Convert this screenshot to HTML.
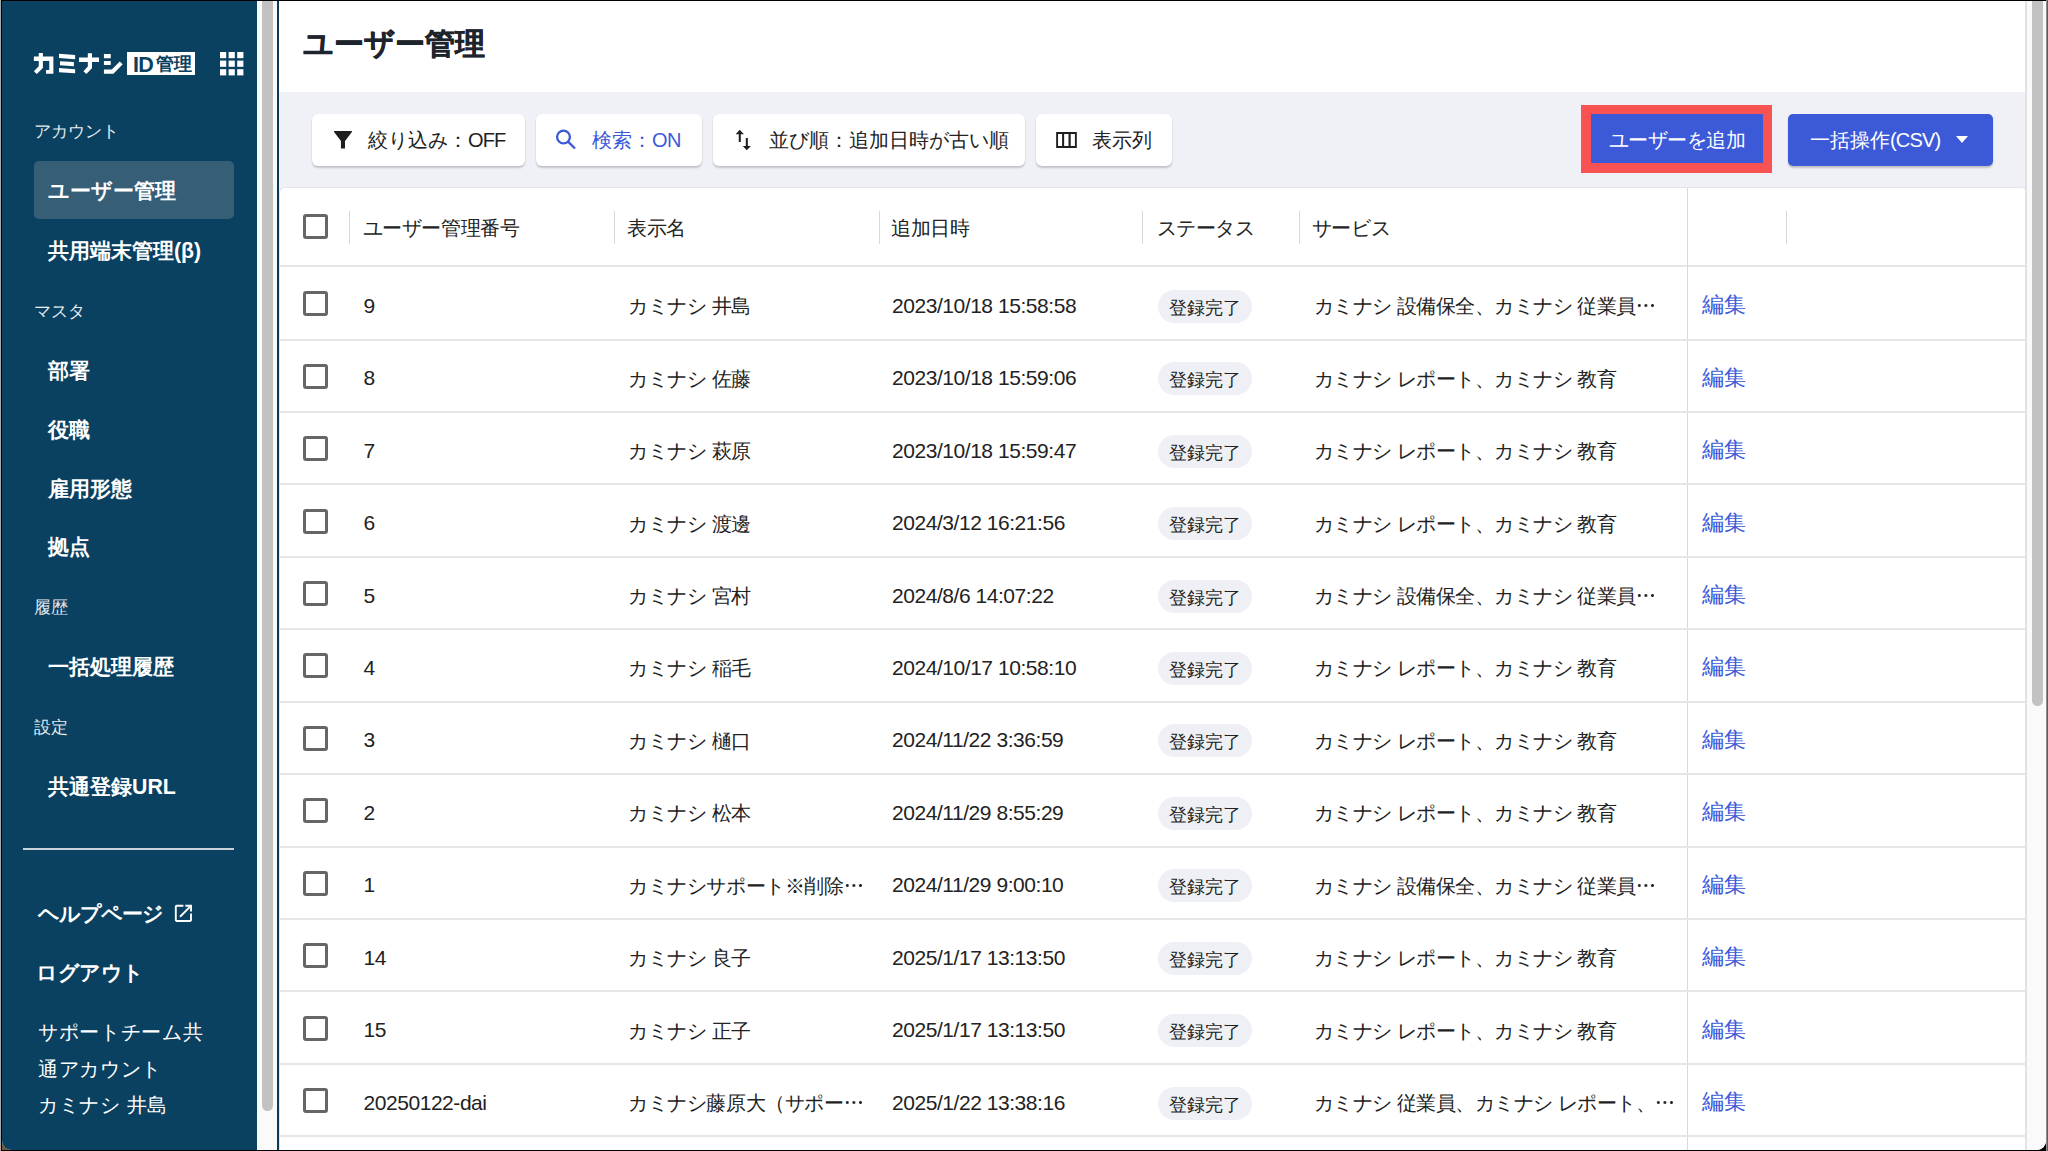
<!DOCTYPE html>
<html lang="ja">
<head>
<meta charset="utf-8">
<style>
*{box-sizing:border-box;margin:0;padding:0}
html,body{width:2048px;height:1151px;overflow:hidden;background:#000}
body{font-family:"Liberation Sans",sans-serif;position:relative;color:#222}
.abs{position:absolute}
#frame{position:absolute;left:2px;top:1px;width:2044px;height:1149px;overflow:hidden;background:#fff;border-radius:0 0 9px 9px}
#side{position:absolute;left:0;top:0;width:255px;height:1149px;background:#0a4060;color:#fff}
#sscroll{position:absolute;left:255px;top:0;width:20px;height:1149px;background:#fafafa}
#sthumb{position:absolute;left:5px;top:0;width:11px;height:1110px;background:#c2c2c2;border-radius:0 0 6px 6px}
#sline{position:absolute;left:275px;top:0;width:2px;height:1149px;background:#0a3a58}
#main{position:absolute;left:277px;top:0;width:1748px;height:1149px;background:#fff;overflow:hidden}
#mscroll{position:absolute;left:2023px;top:0;width:21px;height:1149px;background:#fafafa;border-left:2px solid #e2e2e2}
#mthumb{position:absolute;left:5px;top:0;width:11px;height:705px;background:#c2c2c2;border-radius:0 0 6px 6px}
.lbl{position:absolute;left:32px;font-size:17px;color:#e6ecf0;white-space:nowrap;line-height:20px}
.nav{position:absolute;left:46px;font-size:21.3px;font-weight:bold;color:#fff;white-space:nowrap;line-height:24px}
.btn{position:absolute;top:113px;height:52px;background:#fff;border-radius:6px;box-shadow:0 2px 2px rgba(0,0,0,.18),0 0 1px rgba(0,0,0,.08);font-size:20px;line-height:52px;white-space:nowrap}
.btn span{position:absolute;top:0}
.row{position:absolute;left:0;width:1746px;height:73px;border-bottom:2px solid #e4e4e4}
.cell{position:absolute;font-size:20px;white-space:nowrap;line-height:24px;color:#222}
.cb{position:absolute;left:24px;width:25px;height:25px;border:3px solid #666;border-radius:3px}
.chip{position:absolute;left:879px;width:94px;height:33px;border-radius:17px;background:#eff0f5;font-size:17.5px;line-height:37px;text-align:center;color:#222}
.edit{position:absolute;left:1424px;font-size:22px;color:#3c5ad8;line-height:26px}
.sep{position:absolute;top:22px;width:1px;height:33px;background:#d9d9d9}
.ell{display:inline-block;width:20px;height:3px;vertical-align:6px;background:radial-gradient(circle,#222 1.2px,transparent 1.6px) 0 0/6.6px 3px repeat-x}
.svc{letter-spacing:-0.5px}
.num{font-size:21px;letter-spacing:-0.45px}
.hd{letter-spacing:-0.4px}
</style>
</head>
<body>
<div class="abs" style="left:0;top:0;width:1px;height:1151px;background:#a9a9a9"></div>
<div class="abs" style="left:2046px;top:0;width:1px;height:1151px;background:#8f8f8f"></div>
<div class="abs" style="left:2047px;top:0;width:1px;height:1151px;background:#5c5c5c"></div>
<div class="abs" style="left:2px;top:1140px;width:9px;height:10px;background:#7a5530"></div>
<div id="frame">
  <div id="side">
    <!-- logo -->
    <svg class="abs" style="left:26px;top:45px" width="100" height="34" viewBox="0 0 2048 696"><g fill="#fff">
      <path d="M120,215 L520,215 L520,570 L370,570 L370,490 L435,490 L435,305 L120,305 Z"/>
      <path d="M220,145 L305,145 L305,450 L180,575 L120,515 L220,415 Z"/>
      <path d="M635,160 L965,185 L965,270 L635,245 Z"/>
      <path d="M655,310 L940,330 L940,415 L655,395 Z"/>
      <path d="M635,450 L965,475 L965,560 L635,535 Z"/>
      <path d="M1045,235 L1455,235 L1455,325 L1045,325 Z"/>
      <path d="M1225,150 L1310,150 L1310,455 L1195,575 L1135,515 L1225,420 Z"/>
      <path d="M1555,165 L1695,165 L1695,250 L1555,250 Z"/>
      <path d="M1555,305 L1695,305 L1695,390 L1555,390 Z"/>
      <path d="M1555,480 L1715,480 L1880,315 L1940,375 L1750,570 L1555,570 Z"/>
    </g></svg>
    <div class="abs" style="left:125px;top:51px;width:68px;height:23px;background:#fff;color:#0a4060;white-space:nowrap">
      <span class="abs" style="left:6px;top:0.5px;font-size:21.5px;font-weight:bold;line-height:25px;letter-spacing:-0.6px">ID</span>
      <span class="abs" style="left:29px;top:1px;font-size:17.5px;letter-spacing:-0.3px;font-weight:bold;line-height:23px">管理</span>
    </div>
    <svg class="abs" style="left:217.8px;top:51px" width="24" height="24" viewBox="0 0 24 24"><g fill="#fff"><rect x="0" y="0" width="6.2" height="6.2"/><rect x="8.6" y="0" width="6.2" height="6.2"/><rect x="17.2" y="0" width="6.2" height="6.2"/><rect x="0" y="8.6" width="6.2" height="6.2"/><rect x="8.6" y="8.6" width="6.2" height="6.2"/><rect x="17.2" y="8.6" width="6.2" height="6.2"/><rect x="0" y="17.2" width="6.2" height="6.2"/><rect x="8.6" y="17.2" width="6.2" height="6.2"/><rect x="17.2" y="17.2" width="6.2" height="6.2"/></g></svg>
    <div class="lbl" style="top:121px">アカウント</div>
    <div class="abs" style="left:32px;top:160px;width:200px;height:58px;border-radius:5px;background:#375e77"></div>
    <div class="nav" style="top:178px">ユーザー管理</div>
    <div class="nav" style="top:238px">共用端末管理(β)</div>
    <div class="lbl" style="top:300.5px">マスタ</div>
    <div class="nav" style="top:358px">部署</div>
    <div class="nav" style="top:417px">役職</div>
    <div class="nav" style="top:476px">雇用形態</div>
    <div class="nav" style="top:534px">拠点</div>
    <div class="lbl" style="top:597px">履歴</div>
    <div class="nav" style="top:654px">一括処理履歴</div>
    <div class="lbl" style="top:717px">設定</div>
    <div class="nav" style="top:774px">共通登録URL</div>
    <div class="abs" style="left:21px;top:847px;width:211px;height:2px;background:#c9d3da"></div>
    <div class="nav" style="left:36px;top:901px;letter-spacing:-1px">ヘルプページ</div>
    <svg class="abs" style="left:170px;top:900.6px" width="22.8" height="22.8" viewBox="0 0 24 24"><path fill="#fff" d="M19 19H5V5h7V3H5c-1.11 0-2 .9-2 2v14c0 1.1.89 2 2 2h14c1.1 0 2-.9 2-2v-7h-2v7zM14 3v2h3.59l-9.83 9.83 1.41 1.41L19 6.41V10h2V3h-7z"/></svg>
    <div class="nav" style="left:34px;top:960px;letter-spacing:-0.5px">ログアウト</div>
    <div class="abs" style="left:36px;top:1013px;font-size:20px;letter-spacing:0.65px;line-height:36.5px;color:#fff;white-space:nowrap">サポートチーム共<br>通アカウント<br>カミナシ 井島</div>
  </div>
  <div id="sscroll"><div id="sthumb"></div></div>
  <div id="sline"></div>
  <div id="main">
    <div class="abs" style="left:24px;top:24px;font-size:30.3px;font-weight:bold;line-height:38px;color:#1e242c;-webkit-text-stroke:0.5px #1e242c;white-space:nowrap">ユーザー管理</div>
    <div class="abs" style="left:0;top:91px;width:1748px;height:1058px;background:#eff1f6"></div>
    <!-- toolbar -->
    <div class="btn" style="left:33px;width:213px">
      <svg class="abs" style="left:13px;top:8px" width="40" height="36" viewBox="0 0 1279 1151"><path fill="#1e1e1e" d="M290,290 L860,290 L860,320 L640,610 L640,850 L510,850 L510,610 L290,320 Z"/></svg>
      <span style="left:56px">絞り込み：<span style="position:static;letter-spacing:-0.9px">OFF</span></span>
    </div>
    <div class="btn" style="left:257px;width:166px;color:#3c5ad8">
      <svg class="abs" style="left:0;top:0" width="60" height="52"><circle cx="27.5" cy="23" r="6.4" fill="none" stroke="#3c5ad8" stroke-width="2.3"/><path d="M32.3,27.8 L39,34.5" stroke="#3c5ad8" stroke-width="2.4"/></svg>
      <span style="left:56px">検索：<span style="position:static;letter-spacing:-0.5px">ON</span></span>
    </div>
    <div class="btn" style="left:434px;width:312px">
      <svg class="abs" style="left:12px;top:8px" width="40" height="36" viewBox="0 0 1279 1151"><path fill="#1e1e1e" d="M470,250 L605,395 L505,395 L505,640 L440,640 L440,395 L340,395 Z M665,510 L730,510 L730,770 L830,770 L695,900 L570,770 L665,770 Z"/></svg>
      <span style="left:56px">並び順：追加日時が古い順</span>
    </div>
    <div class="btn" style="left:757px;width:136px">
      <svg class="abs" style="left:10px;top:8px" width="40" height="36" viewBox="0 0 1279 1151"><path fill="#1e1e1e" fill-rule="evenodd" d="M325,320 H985 V830 H325 Z M385,380 V770 H515 V380 Z M580,380 V770 H720 V380 Z M790,380 V770 H925 V380 Z"/></svg>
      <span style="left:56px">表示列</span>
    </div>
    <div class="abs" style="left:1302px;top:103.7px;width:191px;height:68px;background:#f85252"></div>
    <div class="abs" style="left:1312px;top:113.3px;width:172px;height:48.5px;background:#3c5ad8;color:#fff;font-size:20px;line-height:53px;letter-spacing:-0.5px;text-align:center;white-space:nowrap">ユーザーを追加</div>
    <div class="abs" style="left:1509px;top:113px;width:205px;height:52px;background:#3c5ad8;border-radius:5px;box-shadow:0 2px 2px rgba(0,0,0,.2);color:#fff;font-size:20px;line-height:52px;white-space:nowrap">
      <span class="abs" style="left:22px;top:0">一括操作<span style="letter-spacing:-0.8px">(CSV)</span></span>
      <svg class="abs" style="left:168px;top:22px" width="12" height="8" viewBox="0 0 12 8"><path fill="#fff" d="M0 0h12L6 7z"/></svg>
    </div>
    <!-- table card -->
    <div class="abs" id="card" style="left:1px;top:187px;width:1746px;height:980px;background:#fff;border-radius:5px 5px 0 0;box-shadow:0 0 0 1px #e4e4e4">
<div class="abs" style="left:0;top:77px;width:1746px;height:2px;background:#e6e6e6"></div>
<div class="cb" style="left:22.899999999999977px;top:25.80000000000001px"></div>
<div class="sep" style="left:68.60000000000002px;top:22.5px"></div>
<div class="sep" style="left:333.70000000000005px;top:22.5px"></div>
<div class="sep" style="left:598.7px;top:22.5px"></div>
<div class="sep" style="left:862.4000000000001px;top:22.5px"></div>
<div class="sep" style="left:1018.5999999999999px;top:22.5px"></div>
<div class="sep" style="left:1506.3px;top:22.5px"></div>
<div class="cell hd" style="left:82.5px;top:28px">ユーザー管理番号</div>
<div class="cell hd" style="left:347px;top:28px">表示名</div>
<div class="cell hd" style="left:611px;top:28px">追加日時</div>
<div class="cell hd" style="left:876.5999999999999px;top:28px">ステータス</div>
<div class="cell hd" style="left:1031.8px;top:28px">サービス</div>
<div class="abs" style="left:1407px;top:0;width:1px;height:980px;background:#d9d9d9"></div>
<div class="abs" style="left:0;top:150.50px;width:1746px;height:2px;background:#e6e6e6"></div>
<div class="cb" style="left:22.899999999999977px;top:103.28px"></div>
<div class="cell num" style="left:83.5px;top:105.78px">9</div>
<div class="cell" style="left:348px;top:106.28px;letter-spacing:-0.4px">カミナシ 井島</div>
<div class="cell num" style="left:612px;top:105.78px">2023/10/18 15:58:58</div>
<div class="chip" style="left:878px;top:101.78px">登録完了</div>
<div class="cell svc" style="left:1033.8px;top:106.28px">カミナシ 設備保全、カミナシ 従業員<span class=ell></span></div>
<div class="edit" style="left:1421.5px;top:104.28px">編集</div>
<div class="abs" style="left:0;top:222.93px;width:1746px;height:2px;background:#e6e6e6"></div>
<div class="cb" style="left:22.899999999999977px;top:175.72px"></div>
<div class="cell num" style="left:83.5px;top:178.22px">8</div>
<div class="cell" style="left:348px;top:178.72px;letter-spacing:-0.4px">カミナシ 佐藤</div>
<div class="cell num" style="left:612px;top:178.22px">2023/10/18 15:59:06</div>
<div class="chip" style="left:878px;top:174.22px">登録完了</div>
<div class="cell svc" style="left:1033.8px;top:178.72px">カミナシ レポート、カミナシ 教育</div>
<div class="edit" style="left:1421.5px;top:176.72px">編集</div>
<div class="abs" style="left:0;top:295.36px;width:1746px;height:2px;background:#e6e6e6"></div>
<div class="cb" style="left:22.899999999999977px;top:248.14px"></div>
<div class="cell num" style="left:83.5px;top:250.64px">7</div>
<div class="cell" style="left:348px;top:251.14px;letter-spacing:-0.4px">カミナシ 萩原</div>
<div class="cell num" style="left:612px;top:250.64px">2023/10/18 15:59:47</div>
<div class="chip" style="left:878px;top:246.64px">登録完了</div>
<div class="cell svc" style="left:1033.8px;top:251.14px">カミナシ レポート、カミナシ 教育</div>
<div class="edit" style="left:1421.5px;top:249.14px">編集</div>
<div class="abs" style="left:0;top:367.79px;width:1746px;height:2px;background:#e6e6e6"></div>
<div class="cb" style="left:22.899999999999977px;top:320.57px"></div>
<div class="cell num" style="left:83.5px;top:323.07px">6</div>
<div class="cell" style="left:348px;top:323.57px;letter-spacing:-0.4px">カミナシ 渡邊</div>
<div class="cell num" style="left:612px;top:323.07px">2024/3/12 16:21:56</div>
<div class="chip" style="left:878px;top:319.07px">登録完了</div>
<div class="cell svc" style="left:1033.8px;top:323.57px">カミナシ レポート、カミナシ 教育</div>
<div class="edit" style="left:1421.5px;top:321.57px">編集</div>
<div class="abs" style="left:0;top:440.22px;width:1746px;height:2px;background:#e6e6e6"></div>
<div class="cb" style="left:22.899999999999977px;top:393.00px"></div>
<div class="cell num" style="left:83.5px;top:395.50px">5</div>
<div class="cell" style="left:348px;top:396.00px;letter-spacing:-0.4px">カミナシ 宮村</div>
<div class="cell num" style="left:612px;top:395.50px">2024/8/6 14:07:22</div>
<div class="chip" style="left:878px;top:391.50px">登録完了</div>
<div class="cell svc" style="left:1033.8px;top:396.00px">カミナシ 設備保全、カミナシ 従業員<span class=ell></span></div>
<div class="edit" style="left:1421.5px;top:394.00px">編集</div>
<div class="abs" style="left:0;top:512.65px;width:1746px;height:2px;background:#e6e6e6"></div>
<div class="cb" style="left:22.899999999999977px;top:465.44px"></div>
<div class="cell num" style="left:83.5px;top:467.94px">4</div>
<div class="cell" style="left:348px;top:468.44px;letter-spacing:-0.4px">カミナシ 稲毛</div>
<div class="cell num" style="left:612px;top:467.94px">2024/10/17 10:58:10</div>
<div class="chip" style="left:878px;top:463.94px">登録完了</div>
<div class="cell svc" style="left:1033.8px;top:468.44px">カミナシ レポート、カミナシ 教育</div>
<div class="edit" style="left:1421.5px;top:466.44px">編集</div>
<div class="abs" style="left:0;top:585.08px;width:1746px;height:2px;background:#e6e6e6"></div>
<div class="cb" style="left:22.899999999999977px;top:537.87px"></div>
<div class="cell num" style="left:83.5px;top:540.37px">3</div>
<div class="cell" style="left:348px;top:540.87px;letter-spacing:-0.4px">カミナシ 樋口</div>
<div class="cell num" style="left:612px;top:540.37px">2024/11/22 3:36:59</div>
<div class="chip" style="left:878px;top:536.37px">登録完了</div>
<div class="cell svc" style="left:1033.8px;top:540.87px">カミナシ レポート、カミナシ 教育</div>
<div class="edit" style="left:1421.5px;top:538.87px">編集</div>
<div class="abs" style="left:0;top:657.51px;width:1746px;height:2px;background:#e6e6e6"></div>
<div class="cb" style="left:22.899999999999977px;top:610.29px"></div>
<div class="cell num" style="left:83.5px;top:612.79px">2</div>
<div class="cell" style="left:348px;top:613.29px;letter-spacing:-0.4px">カミナシ 松本</div>
<div class="cell num" style="left:612px;top:612.79px">2024/11/29 8:55:29</div>
<div class="chip" style="left:878px;top:608.79px">登録完了</div>
<div class="cell svc" style="left:1033.8px;top:613.29px">カミナシ レポート、カミナシ 教育</div>
<div class="edit" style="left:1421.5px;top:611.29px">編集</div>
<div class="abs" style="left:0;top:729.94px;width:1746px;height:2px;background:#e6e6e6"></div>
<div class="cb" style="left:22.899999999999977px;top:682.73px"></div>
<div class="cell num" style="left:83.5px;top:685.23px">1</div>
<div class="cell" style="left:348px;top:685.73px;letter-spacing:-0.4px">カミナシサポート※削除<span class=ell></span></div>
<div class="cell num" style="left:612px;top:685.23px">2024/11/29 9:00:10</div>
<div class="chip" style="left:878px;top:681.23px">登録完了</div>
<div class="cell svc" style="left:1033.8px;top:685.73px">カミナシ 設備保全、カミナシ 従業員<span class=ell></span></div>
<div class="edit" style="left:1421.5px;top:683.73px">編集</div>
<div class="abs" style="left:0;top:802.37px;width:1746px;height:2px;background:#e6e6e6"></div>
<div class="cb" style="left:22.899999999999977px;top:755.16px"></div>
<div class="cell num" style="left:83.5px;top:757.66px">14</div>
<div class="cell" style="left:348px;top:758.16px;letter-spacing:-0.4px">カミナシ 良子</div>
<div class="cell num" style="left:612px;top:757.66px">2025/1/17 13:13:50</div>
<div class="chip" style="left:878px;top:753.66px">登録完了</div>
<div class="cell svc" style="left:1033.8px;top:758.16px">カミナシ レポート、カミナシ 教育</div>
<div class="edit" style="left:1421.5px;top:756.16px">編集</div>
<div class="abs" style="left:0;top:874.80px;width:1746px;height:2px;background:#e6e6e6"></div>
<div class="cb" style="left:22.899999999999977px;top:827.59px"></div>
<div class="cell num" style="left:83.5px;top:830.09px">15</div>
<div class="cell" style="left:348px;top:830.59px;letter-spacing:-0.4px">カミナシ 正子</div>
<div class="cell num" style="left:612px;top:830.09px">2025/1/17 13:13:50</div>
<div class="chip" style="left:878px;top:826.09px">登録完了</div>
<div class="cell svc" style="left:1033.8px;top:830.59px">カミナシ レポート、カミナシ 教育</div>
<div class="edit" style="left:1421.5px;top:828.59px">編集</div>
<div class="abs" style="left:0;top:947.23px;width:1746px;height:2px;background:#e6e6e6"></div>
<div class="cb" style="left:22.899999999999977px;top:900.01px"></div>
<div class="cell num" style="left:83.5px;top:902.51px">20250122-dai</div>
<div class="cell" style="left:348px;top:903.01px;letter-spacing:-0.4px">カミナシ藤原大（サポー<span class=ell></span></div>
<div class="cell num" style="left:612px;top:902.51px">2025/1/22 13:38:16</div>
<div class="chip" style="left:878px;top:898.51px">登録完了</div>
<div class="cell svc" style="left:1033.8px;top:903.01px">カミナシ 従業員、カミナシ レポート、<span class=ell></span></div>
<div class="edit" style="left:1421.5px;top:901.01px">編集</div>
    </div>
  </div>
  <div id="mscroll"><div id="mthumb"></div></div>
</div>
</body>
</html>
